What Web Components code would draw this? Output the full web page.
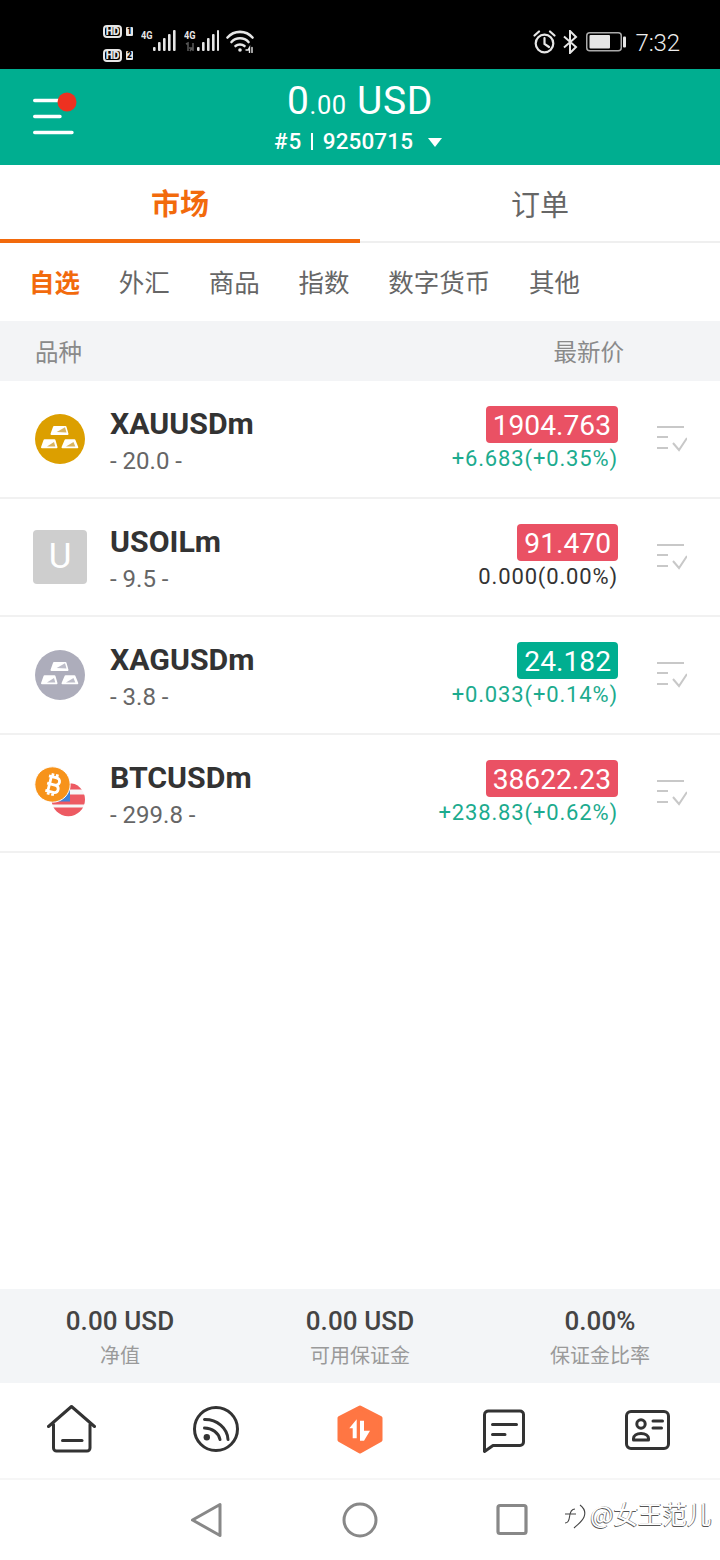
<!DOCTYPE html>
<html lang="zh"><head><meta charset="utf-8"><title>市场</title>
<style>
html,body{margin:0;padding:0;background:#fff}
body{width:720px;height:1560px;overflow:hidden;display:flex;flex-direction:column;font-family:Roboto,"Noto Sans CJK SC",sans-serif;color:#333}
quote-list{flex:1}
</style></head><body>
<status-bar></status-bar>
<app-header></app-header>
<main-tabs></main-tabs>
<sub-tabs></sub-tabs>
<table-head></table-head>
<quote-list>
<quote-row name="XAUUSDm" spread="20.0" price="1904.763" change="+6.683(+0.35%)" dir="down" tone="up" icon="gold"></quote-row>
<quote-row name="USOILm" spread="9.5" price="91.470" change="0.000(0.00%)" dir="down" tone="flat" icon="u"></quote-row>
<quote-row name="XAGUSDm" spread="3.8" price="24.182" change="+0.033(+0.14%)" dir="up" tone="up" icon="silver"></quote-row>
<quote-row name="BTCUSDm" spread="299.8" price="38622.23" change="+238.83(+0.62%)" dir="down" tone="up" icon="btc"></quote-row>
</quote-list>
<summary-bar></summary-bar>
<bottom-nav></bottom-nav>
<system-nav></system-nav>
<script>
function def(name, html){
  customElements.define(name, class extends HTMLElement{
    connectedCallback(){ if(!this.shadowRoot){ this.attachShadow({mode:'open'}).innerHTML = html; } }
  });
}
def('status-bar', `<style>
:host{display:flex;height:69px;background:#000;color:#e6e6e6;box-sizing:border-box;padding:0 40px 0 103px;align-items:center;justify-content:space-between;font-family:Roboto,sans-serif}
.l,.r{display:flex;align-items:center}
.hd{display:flex;flex-direction:column;gap:12px;margin-top:17px}
.hdr{display:flex;align-items:center;gap:4px;height:12px}
.pill{width:19px;height:13px;box-sizing:border-box;border:2px solid #e6e6e6;border-radius:4px;font-size:10.500px;font-weight:900;line-height:9px;text-align:center;letter-spacing:-.4px}
.n{width:7px;height:9px;background:#e6e6e6;color:#000;border-radius:1px;font-size:8.500px;font-weight:900;line-height:9px;text-align:center}
.sig{position:relative;display:flex;margin-top:13px}
.g{position:absolute;left:0;top:0;font-size:11.500px;font-weight:700;line-height:12px;transform:scaleX(.8);transform-origin:left}
svg{display:block}
.time{font-size:24px;font-weight:300;margin-left:8px;line-height:28px;margin-top:16px;letter-spacing:-.1px;color:#eee}
.r svg{margin-top:14px}
</style>
<div class="l">
 <div class="hd"><div class="hdr"><span class="pill">HD</span><span class="n">1</span></div><div class="hdr"><span class="pill">HD</span><span class="n">2</span></div></div>
 <div class="sig" style="margin-left:8px;width:35px"><span class="g">4G</span><svg width="35" height="24" viewBox="0 0 35 24" fill="#e6e6e6"><rect x="12" y="18" width="2.600" height="4" rx="1"/><rect x="17" y="13" width="2.600" height="9" rx="1"/><rect x="22" y="9" width="2.600" height="13" rx="1"/><rect x="27" y="5" width="2.600" height="17" rx="1"/><rect x="32" y="1" width="2.600" height="21" rx="1"/></svg></div>
 <div class="sig" style="margin-left:8px;width:35px"><span class="g">4G</span><svg width="35" height="24" viewBox="0 0 35 24" fill="#e6e6e6"><rect x="13" y="18" width="2.600" height="4" rx="1"/><rect x="18" y="13" width="2.600" height="9" rx="1"/><rect x="23" y="9" width="2.600" height="13" rx="1"/><rect x="28" y="5" width="2.600" height="17" rx="1"/><rect x="33" y="1" width="2" height="21" rx="1"/><path d="M2 15l2-1v8M6 22l2-3h-3M9 14v8" stroke="#555" stroke-width="1.600" fill="none"/></svg></div>
 <svg style="margin:13px 0 0 7px" width="28" height="24" viewBox="0 0 28 24" fill="none" stroke="#e6e6e6" stroke-width="2.600" stroke-linecap="round"><path d="M1.500 8.500C8 1 20 1 26.500 8.500"/><path d="M5.500 13C10 8 18 8 22.500 13"/><path d="M9.500 17C12 15 16 15 18.500 17"/><circle cx="14" cy="21" r="1.800" fill="#e6e6e6" stroke="none"/><path d="M20 21h2l1.500-2.500v5M26 18.500v5" stroke-width="1.400"/></svg>
</div>
<div class="r">
 <svg width="23" height="24" viewBox="0 0 23 24" fill="none" stroke="#e6e6e6" stroke-width="2.200"><circle cx="11.500" cy="13.500" r="8.800"/><path d="M11.500 8v6l4.500 3M1.500 5.500L6 1.500M21.500 5.500L17 1.500" stroke-linecap="round"/></svg>
 <svg style="margin-left:7px" width="15" height="24" viewBox="0 0 15 24" fill="none" stroke="#e6e6e6" stroke-width="2"><path d="M1 6.500L13 17l-6 6V1l6 6L1 17.500"/></svg>
 <svg style="margin-left:8px" width="41" height="24" viewBox="0 0 41 24"><rect x=".75" y="2.750" width="34.500" height="18" rx="3" fill="none" stroke="#aaa" stroke-width="1.500"/><rect x="3.500" y="5" width="20.500" height="13.500" rx="1" fill="#e6e6e6"/><rect x="37" y="6.500" width="3" height="11" rx="1" fill="#e6e6e6"/></svg>
 <span class="time">7:32</span>
</div>`);
def('app-header', `<style>
:host{display:grid;grid-template-columns:1fr auto 1fr;height:96px;background:#00ae90;color:#fff;font-family:Roboto,sans-serif}
.menu{position:relative;margin:23px 0 0 33px;width:50px;height:50px}
.menu svg{display:block}
.c{display:flex;flex-direction:column;align-items:center;padding-top:9px}
.bal{font-size:39px;line-height:46px;letter-spacing:.6px}
.bal small{font-size:25.500px}
.acc{display:flex;align-items:center;font-size:22.500px;font-weight:500;line-height:30px;margin-top:-2px;padding-right:4px}
.sep{width:1.500px;height:17px;background:#fff;margin:0 10px 0 9px}
.tri{width:0;height:0;border-left:7.500px solid transparent;border-right:7.500px solid transparent;border-top:9px solid #fff;margin-left:15px;margin-top:2px}
</style>
<div class="menu"><svg width="50" height="50" viewBox="0 0 50 50"><g stroke="#fff" stroke-width="3.400" stroke-linecap="round"><path d="M1.700 8.500H30M1.700 24.500H27M1.700 40.500H39"/></g><circle cx="34" cy="10" r="9.500" fill="#ee3120"/></svg></div>
<div class="c"><div class="bal">0<small>.00</small> USD</div><div class="acc"><span style="letter-spacing:1px">#5</span><span class="sep"></span><span style="letter-spacing:.1px">9250715</span><span class="tri"></span></div></div>
<div></div>`);
def('main-tabs', `<style>
:host{display:grid;grid-template-columns:1fr 1fr;height:78px;box-sizing:border-box;border-bottom:2px solid #efefef;font-family:"Noto Sans CJK SC",sans-serif}
div{display:flex;align-items:center;justify-content:center;font-size:29px;color:#666;height:78px;box-sizing:border-box;padding-bottom:3px}
.on{color:#f26a0c;font-weight:700;border-bottom:4px solid #f26a0c;padding-bottom:1px}
</style><div class="on">市场</div><div>订单</div>`);
def('sub-tabs', `<style>
:host{display:flex;height:78px;box-sizing:border-box;padding:0 0 4px 29px;gap:38.800px;align-items:center;font-family:"Noto Sans CJK SC",sans-serif;font-size:25.500px;color:#666}
.on{color:#f26a0c;font-weight:700}
</style><span class="on">自选</span><span>外汇</span><span>商品</span><span>指数</span><span>数字货币</span><span>其他</span>`);
def('table-head', `<style>
:host{display:flex;height:60px;background:#f3f4f6;box-sizing:border-box;padding:0 96px 0 35px;justify-content:space-between;align-items:center;font-family:"Noto Sans CJK SC",sans-serif;font-size:23.500px;color:#8a8a8a}
</style><span>品种</span><span>最新价</span>`);
const bars = (fill, tint) => `<svg width="50" height="50" viewBox="0 0 50 50"><circle cx="25" cy="25" r="25" fill="${fill}"/>
<g fill="#fff" stroke="#fff" stroke-width="2" stroke-linejoin="round"><path d="M19 13H30.500l2 7H16.500z"/><path d="M9.500 26.300H19.500l2 7H7z"/><path d="M30.500 26.300H39.500l2.800 7H27.500z"/></g>
<g fill="${tint}"><path d="M21.700 18l8.300-4.700 1.500 5.200z"/><path d="M12 32.500l7-4.500 1.300 4.500z"/><path d="M31 32.500l7.500-4.500 1.800 4.500z"/></g></svg>`;
const icons = {
  gold: bars('#dc9f00','#d9b45e'),
  silver: bars('#adadbb','#bdbdc9'),
  u: `<div style="width:54px;height:54px;background:#cecece;border-radius:4px;color:#fff;font:400 35px/54px Roboto,sans-serif;text-align:center">U</div>`,
  btc: `<svg width="52" height="54" viewBox="0 0 52 54" style="overflow:visible"><defs><clipPath id="f"><circle cx="33.300" cy="33.500" r="16.700"/></clipPath></defs>
  <g clip-path="url(#f)"><rect x="14" y="14" width="38" height="38" fill="#f6f6f6"/><rect x="14" y="17.500" width="38" height="6" fill="#ed5a62"/><rect x="14" y="28.500" width="38" height="10" fill="#ed5a62"/><rect x="14" y="41.500" width="38" height="10" fill="#ed5a62"/><rect x="14" y="14" width="21" height="21.500" fill="#3d82d8"/></g>
  <circle cx="17.500" cy="18.500" r="17.700" fill="#f7931a" stroke="#fff" stroke-width="1"/>
  <g transform="rotate(14 17.500 18.500)" fill="none" stroke="#fff" stroke-width="3"><path d="M12 11h8a3.700 3.700 0 0 1 0 7.500h-8M12 18.500h9a3.800 3.800 0 0 1 0 7.500h-9M14.500 11v15M15.500 7.500v3.500M20 7.500v3.500M15.500 26v3.500M20 26v3.500" stroke-width="2.800"/></g></svg>`
};
customElements.define('quote-row', class extends HTMLElement{
  connectedCallback(){
    if(this.shadowRoot) return;
    const a = n => this.getAttribute(n);
    const s = this.attachShadow({mode:'open'});
    s.innerHTML = `<style>
:host{display:flex;height:118px;box-sizing:border-box;border-bottom:2px solid #f1f1f1;padding:0 33px 0 33px;align-items:center;font-family:Roboto,sans-serif}
.av{width:54px;height:54px;display:flex;align-items:center;justify-content:center;flex:none;${a('icon')==='btc'?'align-items:flex-start;justify-content:flex-start;padding-left:2px;box-sizing:border-box;':''}}
.nm{margin-left:23px;flex:1}
.t{font-size:30.300px;font-weight:700;color:#333;line-height:36px;margin-top:4px}
.s{font-size:24px;color:#666;line-height:30px;margin-top:4px}
.q{display:flex;flex-direction:column;align-items:flex-end;margin-top:2px}
.p{height:37px;line-height:39px;font-size:28.200px;color:#fff;padding:0 7px;border-radius:4px;background:${a('dir')==='up'?'#00ae90':'#ea5164'}}
.c{font-size:22px;line-height:30px;margin-top:1px;letter-spacing:.85px;color:${a('tone')==='up'?'#1cab8e':'#333'}}
svg{display:block}
.chk{margin-left:39px;flex:none}
</style>
<div class="av">${icons[a('icon')]}</div>
<div class="nm"><div class="t">${a('name')}</div><div class="s">- ${a('spread')} -</div></div>
<div class="q"><div class="p">${a('price')}</div><div class="c">${a('change')}</div></div>
<svg class="chk" width="30" height="30" viewBox="0 0 30 30" fill="none" stroke="#c8c8c8" stroke-width="2"><path d="M0 3h27M0 13h11M0 24h11M16 19l6 7 8-12"/></svg>`;
  }
});
def('summary-bar', `<style>
:host{display:grid;grid-template-columns:repeat(3,1fr);height:94px;background:#f3f5f7;text-align:center;box-sizing:border-box;padding-top:16px}
.v{font:500 26px/32px Roboto,sans-serif;color:#444;letter-spacing:.1px}
.l{font:20px/32px "Noto Sans CJK SC",sans-serif;color:#9a9a9a;margin-top:2px}
</style>
<div><div class="v">0.00 USD</div><div class="l">净值</div></div>
<div><div class="v">0.00 USD</div><div class="l">可用保证金</div></div>
<div><div class="v">0.00%</div><div class="l">保证金比率</div></div>`);
def('bottom-nav', `<style>
:host{display:grid;grid-template-columns:repeat(5,1fr);height:97px;box-sizing:border-box;border-bottom:2px solid #f6f6f6;padding-bottom:3px;align-items:center;justify-items:center}
svg{display:block}
</style>
<svg width="50" height="50" viewBox="0 0 50 50" fill="none" stroke="#333" stroke-width="3" stroke-linecap="round" stroke-linejoin="round"><path d="M1.500 22.500L24.500 2.500L47.500 22.500M6.500 20.500V44a3 3 0 0 0 3 3H40a3 3 0 0 0 3-3V20.500"/><path d="M15.500 36.500H35"/></svg>
<svg width="50" height="50" viewBox="0 0 50 50" fill="none" stroke="#333" stroke-width="3" stroke-linecap="round"><circle cx="25" cy="25" r="21.500"/><path d="M13.500 15.500a23 21 0 0 1 23.500 20M13.500 24a16 14 0 0 1 15.500 11.500"/><circle cx="15.800" cy="33.300" r="3.200" fill="#333" stroke="none"/></svg>
<svg width="50" height="50" viewBox="0 0 50 50"><path d="M25 3.500L45.500 14V36L25 47.500 4.500 36V14z" fill="#ff7643" stroke="#ff7643" stroke-width="4" stroke-linejoin="round"/><path d="M21.700 15.300V34.300H17.700V24.300H14.300z" fill="#fff"/><path d="M25 16.700H29V26.700H35L29 36.700H25z" fill="#fff"/></svg>
<svg width="50" height="50" viewBox="0 0 50 50" fill="none" stroke="#333" stroke-width="3" stroke-linecap="round" stroke-linejoin="round"><path d="M10 7h31a3.500 3.500 0 0 1 3.500 3.500V38a3.500 3.500 0 0 1-3.500 3.500H14L5.500 47.500V11A4 4 0 0 1 10 7z"/><path d="M13.500 20.500H37.500M13.500 30.500H26"/></svg>
<svg width="50" height="50" viewBox="0 0 50 50" fill="none" stroke="#333" stroke-width="3" stroke-linecap="round" stroke-linejoin="round"><rect x="3.500" y="7.500" width="42" height="37" rx="4.500"/><circle cx="18" cy="20" r="4.200"/><path d="M10.500 36v-1.500c0-3 3-5 7.500-5s7.500 2 7.500 5V36z"/><path d="M30 17h9.500M30 24h8.500"/></svg>`);
def('system-nav', `<style>
:host{display:flex;position:relative;flex:none;height:80px;align-items:center;box-sizing:border-box;padding-left:190px}
svg{display:block}
.wm{position:absolute;left:563px;top:15px;display:flex;align-items:center;font:24.500px/38px "Noto Sans CJK SC",Roboto,sans-serif;color:#fff;text-shadow:1px 0 0 #777,-.5px .5px 0 #555}
.wm svg{margin-right:3px;margin-top:6px}
</style>
<svg width="32" height="36" viewBox="0 0 32 36" fill="none" stroke="#888" stroke-width="3" stroke-linejoin="round"><path d="M2.500 18L30 2.500V33.500z"/></svg>
<svg style="margin-left:120px" width="36" height="36" viewBox="0 0 36 36" fill="none" stroke="#888" stroke-width="3"><circle cx="18" cy="18" r="16"/></svg>
<svg style="margin-left:117px" width="34" height="34" viewBox="0 0 34 34" fill="none" stroke="#888" stroke-width="3.200"><rect x="3" y="2.500" width="28" height="28" rx="2"/></svg>
<div class="wm"><svg width="24" height="30" viewBox="0 0 24 30" fill="none" stroke="#444" stroke-width="1.100"><path d="M2 21c3 0 4-2 4.500-6 .5-5 1.500-8 5.500-8M2 12h11M17 3c4 3 6 7 4 12s-6 7-10 11"/></svg><span>@女王范儿</span></div>`);
</script>
</body></html>
